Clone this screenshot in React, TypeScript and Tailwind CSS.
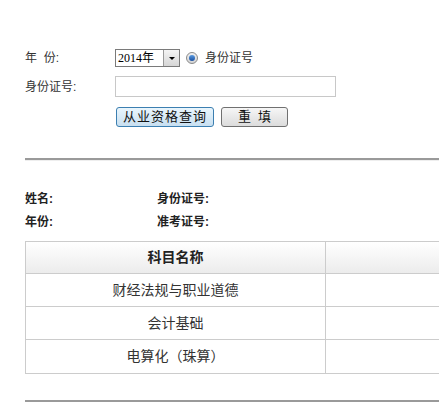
import React from "react";

export default function App() {
  const rows = ["财经法规与职业道德", "会计基础", "电算化（珠算）"];
  return (
    <div
      className="w-[439px] h-[407px] overflow-hidden bg-white text-[#333] text-[12px]"
      style={{ fontFamily: '"Liberation Sans", "Noto Sans CJK SC", sans-serif' }}
    >
      <div className="pl-[25px]">
        {/* row 1 */}
        <div className="mt-[49px] flex items-center h-[18px]">
          <div className="w-[90px] leading-[18px]">年&nbsp;&nbsp;份:</div>
          <div className="flex items-center w-[65px] h-[18px] border border-[#7a7a7a] bg-white">
            <div className="flex-1 pl-[2px] leading-[16px] text-[12px] text-black" style={{ fontFamily: '"Liberation Serif", "Noto Sans CJK SC", serif' }}>2014年</div>
            <div className="w-[16px] h-[16px] border-l border-[#9a9a9a] bg-gradient-to-b from-[#f4f4f4] to-[#d6d6d6] flex items-center justify-center">
              <div className="w-0 h-0 border-l-[3px] border-r-[3px] border-t-[3px] border-l-transparent border-r-transparent border-t-black" />
            </div>
          </div>
          <div className="ml-[6px] w-[12px] h-[12px] rounded-full border border-[#8a8a8a] bg-gradient-to-b from-[#f0f0f0] to-[#d4d4d4] flex items-center justify-center">
            <div className="w-[6px] h-[6px] rounded-full bg-gradient-to-b from-[#5a9be0] to-[#1a4fa0]" />
          </div>
          <div className="ml-[7px] leading-[18px]">身份证号</div>
        </div>
        {/* row 2 */}
        <div className="mt-[9px] flex items-center h-[21px]">
          <div className="w-[90px]">身份证号:</div>
          <div className="w-[221px] h-[21px] border border-[#c8c8c8] bg-white" />
        </div>
        {/* row 3 */}
        <div className="mt-[10px] flex items-center ml-[91px] gap-[7px]">
          <button className="w-[98px] h-[20px] rounded-[3px] border border-[#3c7fb1] bg-gradient-to-b from-[#eaf6fd] to-[#c8dff0] text-[13px] text-[#111] leading-[18px] tracking-[1px]">
            从业资格查询
          </button>
          <button className="w-[67px] h-[20px] rounded-[3px] border border-[#707070] bg-gradient-to-b from-[#f6f6f6] to-[#dcdcdc] text-[13px] text-[#111] leading-[18px]">
            重&nbsp;&nbsp;填
          </button>
        </div>
        {/* hr */}
        <div className="mt-[31px] border-t-2 border-[#9a9a9a] border-b border-b-[#eeeeee]" />
        {/* info */}
        <div className="mt-[27px] font-bold text-[#222] leading-[23px]">
          <div className="flex">
            <div className="w-[132px]">姓名:</div>
            <div>身份证号:</div>
          </div>
          <div className="flex">
            <div className="w-[132px]">年份:</div>
            <div>准考证号:</div>
          </div>
        </div>
        {/* table */}
        <div className="mt-[7px] w-[600px] border border-[#cccccc]">
          <div className="flex h-[32px] bg-gradient-to-b from-[#ffffff] to-[#ececec] border-b border-[#cccccc]">
            <div className="w-[300px] border-r border-[#cccccc] flex items-center justify-center font-bold text-[14px] text-[#222]">
              科目名称
            </div>
            <div className="flex-1" />
          </div>
          {rows.map((r, i) => (
            <div key={r} className={`flex h-[33px] ${i < rows.length - 1 ? "border-b border-[#cccccc]" : ""}`}>
              <div className="w-[300px] border-r border-[#cccccc] flex items-center justify-center text-[14px] text-[#333]">
                {r}
              </div>
              <div className="flex-1" />
            </div>
          ))}
        </div>
        <div className="mt-[26px] border-t-2 border-[#9a9a9a]" />
      </div>
    </div>
  );
}
